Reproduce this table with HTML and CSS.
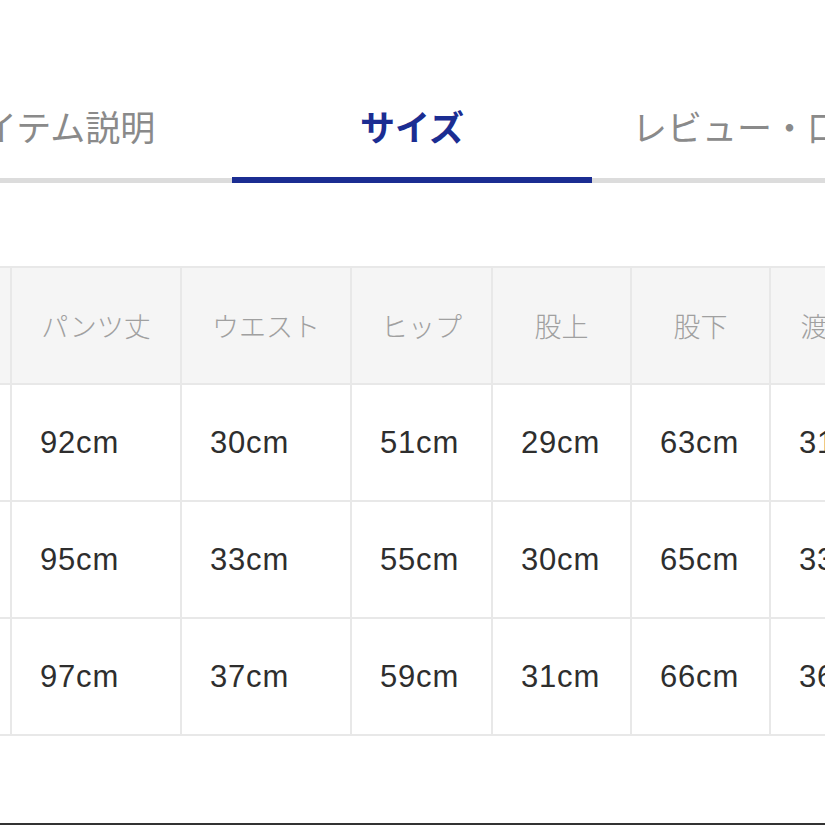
FILE: index.html
```html
<!DOCTYPE html>
<html lang="ja">
<head>
<meta charset="utf-8">
<title>サイズ</title>
<link rel="stylesheet" href="styles.css">
</head>
<body>
<div class="page">
  <nav class="tabs">
    <div class="tab">アイテム説明</div>
    <div class="tab tab-active">サイズ</div>
    <div class="tab">レビュー・口コミ</div>
  </nav>
  <div class="size-table">
    <div class="cell head first">サイズ</div>
    <div class="cell head">パンツ丈</div>
    <div class="cell head">ウエスト</div>
    <div class="cell head">ヒップ</div>
    <div class="cell head">股上</div>
    <div class="cell head">股下</div>
    <div class="cell head">渡り幅</div>

    <div class="cell first">S</div>
    <div class="cell">92cm</div>
    <div class="cell">30cm</div>
    <div class="cell">51cm</div>
    <div class="cell">29cm</div>
    <div class="cell">63cm</div>
    <div class="cell">31cm</div>

    <div class="cell first">M</div>
    <div class="cell">95cm</div>
    <div class="cell">33cm</div>
    <div class="cell">55cm</div>
    <div class="cell">30cm</div>
    <div class="cell">65cm</div>
    <div class="cell">33cm</div>

    <div class="cell first">L</div>
    <div class="cell">97cm</div>
    <div class="cell">37cm</div>
    <div class="cell">59cm</div>
    <div class="cell">31cm</div>
    <div class="cell">66cm</div>
    <div class="cell">36cm</div>
  </div>
  <div class="bottom-bar"></div>
</div>
</body>
</html>
```

FILE: styles.css
```css
html, body {
  margin: 0;
  padding: 0;
  background: #ffffff;
}

.page {
  width: 825px;
  height: 825px;
  overflow: hidden;
  display: flex;
  flex-direction: column;
  font-family: "Noto Sans CJK JP", "Liberation Sans", sans-serif;
}

.tabs {
  display: flex;
  margin-left: -128px;
  width: 1200px;
  flex-shrink: 0;
}

.tab {
  width: 360px;
  flex-shrink: 0;
  box-sizing: border-box;
  padding-top: 107px;
  padding-bottom: 35px;
  height: 183px;
  text-align: center;
  font-size: 35px;
  line-height: 38px;
  color: #8a8a8a;
  border-bottom: 5px solid #dcdcdc;
  white-space: nowrap;
}

.tab-active {
  color: #1b2d92;
  font-weight: bold;
  border-bottom: 6px solid #1b2d92;
  padding-bottom: 34px;
}

.size-table {
  margin-top: 83px;
  margin-left: -90px;
  width: 1100px;
  flex-shrink: 0;
  display: grid;
  grid-template-columns: 100px 168px 168px 139px 137px 137px 140px;
  grid-auto-rows: 115px;
  gap: 2px;
  background: #e8e8e8;
  border-top: 2px solid #e8e8e8;
  border-bottom: 2px solid #e8e8e8;
}

.cell {
  background: #ffffff;
  display: flex;
  align-items: center;
  padding-left: 28px;
  font-family: "Liberation Sans", "Noto Sans CJK JP", sans-serif;
  font-size: 31px;
  letter-spacing: 0.8px;
  color: #2e2e2e;
  white-space: nowrap;
}

.cell.head {
  background: #f5f5f5;
  justify-content: center;
  padding-left: 0;
  font-family: "Noto Sans CJK JP", sans-serif;
  font-size: 27px;
  letter-spacing: 0;
  color: #a0a0a0;
  font-weight: 300;
}

.cell.first,
.cell.head.first {
  justify-content: flex-start;
  padding-left: 10px;
}

.bottom-bar {
  margin-top: auto;
  height: 2px;
  background: #333333;
  flex-shrink: 0;
}
```
